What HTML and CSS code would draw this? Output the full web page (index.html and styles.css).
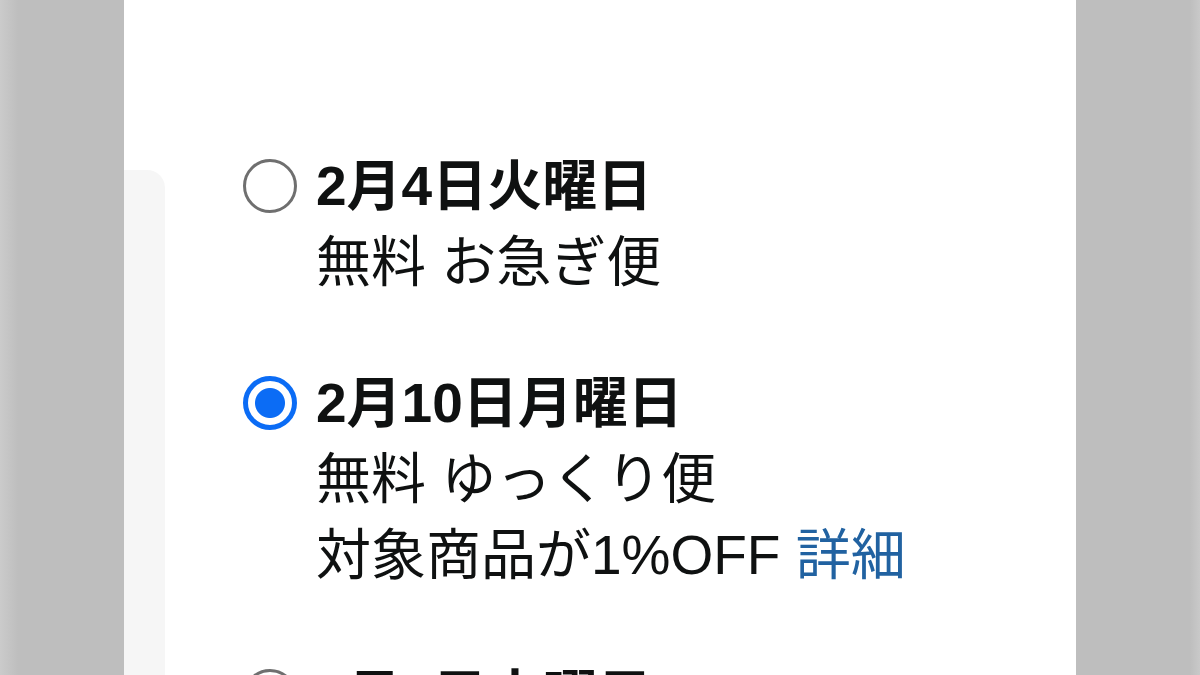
FILE: index.html
```html
<!DOCTYPE html>
<html lang="ja">
<head>
<meta charset="utf-8">
<title>お届け日の選択</title>
<link rel="stylesheet" href="styles.css">
</head>
<body>
<div class="page">
  <div class="shade shade-left"></div>
  <main class="sheet">
    <aside class="side"><div class="side-card"></div></aside>
    <section class="options">
      <label class="option">
        <input class="radio" type="radio" name="delivery">
        <div class="opt-text">
          <div class="opt-date">2月4日火曜日</div>
          <div class="opt-line">無料 お急ぎ便</div>
        </div>
      </label>
      <label class="option">
        <input class="radio" type="radio" name="delivery" checked>
        <div class="opt-text">
          <div class="opt-date">2月10日月曜日</div>
          <div class="opt-line">無料 ゆっくり便</div>
          <div class="opt-line">対象商品が1%OFF <a class="link" href="#">詳細</a></div>
        </div>
      </label>
      <label class="option">
        <input class="radio" type="radio" name="delivery">
        <div class="opt-text">
          <div class="opt-date">2月5日水曜日</div>
          <div class="opt-line">無料 通常配送</div>
        </div>
      </label>
    </section>
  </main>
  <div class="shade shade-right"></div>
</div>
</body>
</html>
```
FILE: styles.css
```css
html, body {
  margin: 0;
  height: 100%;
  overflow: hidden;
}

body {
  background: #bebebe;
  font-family: "Liberation Sans", "Noto Sans CJK JP", sans-serif;
  color: #0f1111;
}

.page {
  display: flex;
  height: 675px;
}

.shade {
  flex: none;
  width: 124px;
  background: #bebebe;
}

.shade-left {
  background: linear-gradient(to right, #cbcbcb 0, #bebebe 18px);
}

.shade-right {
  background: linear-gradient(to left, #c9c9c9 0, #bebebe 10px);
}

.sheet {
  flex: 1;
  display: flex;
  background: #ffffff;
  overflow: hidden;
}

.side {
  flex: none;
  width: 41px;
  padding-top: 170px;
  box-sizing: border-box;
}

.side-card {
  height: 100%;
  background: #f6f6f6;
  border-top-right-radius: 18px;
}

.options {
  display: flex;
  flex-direction: column;
  gap: 65px;
  padding: 148px 0 0 78px;
}

.option {
  display: flex;
  gap: 19px;
  font-size: 55px;
  line-height: 76px;
}

.radio {
  appearance: none;
  -webkit-appearance: none;
  flex: none;
  width: 54px;
  height: 54px;
  margin: 11px 0 0 0;
  box-sizing: border-box;
  border-radius: 50%;
  border: 3px solid #6f6f6f;
  background: #ffffff;
}

.radio:checked {
  border: 5px solid #0b6cf5;
  background: radial-gradient(circle at center, #0b6cf5 0, #0b6cf5 14.5px, #ffffff 15.5px);
}

.opt-date {
  font-weight: 700;
}

.link {
  color: #2162a1;
  text-decoration: none;
}
```
